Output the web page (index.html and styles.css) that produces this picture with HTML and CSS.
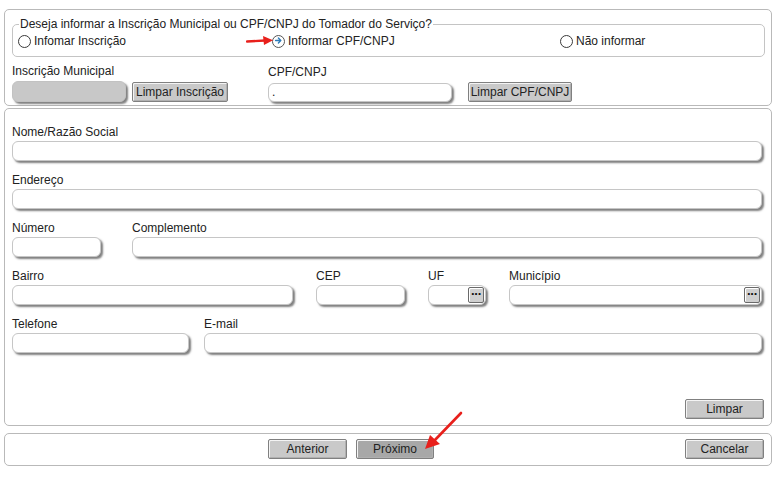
FILE: index.html
```html
<!DOCTYPE html>
<html lang="pt-BR">
<head>
<meta charset="utf-8">
<title>Tomador do Serviço</title>
<link rel="stylesheet" href="styles.css">
</head>
<body>
<div class="page">
  <section class="panel panel-top">
    <fieldset class="choice">
      <legend>Deseja informar a Inscrição Municipal ou CPF/CNPJ do Tomador do Serviço?</legend>
      <div class="radios">
        <label class="radio r-first"><span class="dot"></span>Infomar Inscrição</label>
        <label class="radio r-second"><span class="dot dot-on"><svg viewBox="0 0 13 13" width="13" height="13"><path d="M3.6 6.5h5.2M6.4 4.1l2.4 2.4-2.4 2.4" fill="none" stroke="#2b7bb9" stroke-width="1.4" stroke-linecap="round" stroke-linejoin="round"/></svg></span>Informar CPF/CNPJ</label>
        <label class="radio"><span class="dot"></span>Não informar</label>
      </div>
    </fieldset>
    <div class="id-row">
      <div class="id-group">
        <div class="lbl lbl-im">Inscrição Municipal</div>
        <div class="ctrl">
          <div class="field field-grey w-im"></div>
          <button class="btn btn-im">Limpar Inscrição</button>
        </div>
      </div>
      <div class="id-group">
        <div class="lbl">CPF/CNPJ</div>
        <div class="ctrl ctrl-cpf">
          <div class="field w-cpf">.</div>
          <button class="btn btn-cpf">Limpar CPF/CNPJ</button>
        </div>
      </div>
    </div>
  </section>

  <section class="panel panel-form">
    <div class="row">
      <div class="col grow"><div class="lbl">Nome/Razão Social</div><div class="field"></div></div>
    </div>
    <div class="row">
      <div class="col grow"><div class="lbl">Endereço</div><div class="field"></div></div>
    </div>
    <div class="row gap-num">
      <div class="col w-num"><div class="lbl">Número</div><div class="field"></div></div>
      <div class="col grow"><div class="lbl">Complemento</div><div class="field"></div></div>
    </div>
    <div class="row gap-bairro">
      <div class="col w-bairro"><div class="lbl">Bairro</div><div class="field"></div></div>
      <div class="col w-cep"><div class="lbl">CEP</div><div class="field"></div></div>
      <div class="col w-uf"><div class="lbl">UF</div><div class="field has-pick"><span class="pick">···</span></div></div>
      <div class="col grow"><div class="lbl">Município</div><div class="field has-pick"><span class="pick">···</span></div></div>
    </div>
    <div class="row gap-tel">
      <div class="col w-tel"><div class="lbl">Telefone</div><div class="field"></div></div>
      <div class="col grow"><div class="lbl">E-mail</div><div class="field"></div></div>
    </div>
    <div class="form-actions">
      <button class="btn btn-wide">Limpar</button>
    </div>
  </section>

  <section class="panel panel-nav">
    <button class="btn btn-wide btn-prev">Anterior</button>
    <button class="btn btn-wide btn-dark">Próximo</button>
    <button class="btn btn-wide btn-cancel">Cancelar</button>
  </section>

  <svg class="arrow arrow-right" width="30" height="12" viewBox="0 0 30 12">
    <path d="M1 6.5 L19 5.5" stroke="#e8201c" stroke-width="2.4" stroke-linecap="round" fill="none"/>
    <path d="M27 5.2 L17 1 L18 10 Z" fill="#e8201c"/>
  </svg>
  <svg class="arrow arrow-down" width="44" height="40" viewBox="0 0 44 40">
    <path d="M40 2 L13 30" stroke="#e8201c" stroke-width="2.6" stroke-linecap="round" fill="none"/>
    <path d="M4 38 L9 24 L19 33 Z" fill="#e8201c"/>
  </svg>
</div>
</body>
</html>
```
FILE: styles.css
```css
* { box-sizing: border-box; }
html, body { margin: 0; padding: 0; background: #ffffff; }
body {
  font-family: "Liberation Sans", Arial, sans-serif;
  font-size: 12px;
  color: #222;
}
.page {
  position: relative;
  width: 777px;
  height: 477px;
  padding: 9px 0 0 4px;
}
.panel {
  width: 768px;
  border: 1px solid #b9b9b9;
  border-radius: 5px;
  background: #fff;
}

/* ---------- generic field ---------- */
.lbl {
  line-height: 14px;
  white-space: nowrap;
  color: #222;
}
.field {
  position: relative;
  height: 20px;
  border: 1px solid #c6c6c6;
  border-radius: 6px;
  background: #fff;
  box-shadow: 2px 2px 2px rgba(0, 0, 0, 0.5);
  font-size: 12px;
  line-height: 16px;
  padding-left: 3px;
}
.btn {
  height: 20px;
  padding: 0 8px;
  font-family: "Liberation Sans", Arial, sans-serif;
  font-size: 12px;
  color: #222;
  background: #c9c9c9;
  border: 1px solid #808080;
  border-radius: 2px;
  box-shadow: inset 1px 1px 0 #f4f4f4, inset -1px -1px 0 #b0b0b0;
  line-height: 16px;
}

/* ---------- top panel ---------- */
.panel-top {
  height: 97px;
  padding: 7px 6px 0 7px;
}
.choice {
  margin: 0;
  width: 753px;
  border: 1px solid #c4c4c4;
  border-radius: 5px;
  padding: 3px 6px 8px 6px;
}
.choice legend {
  padding: 0 1px;
  line-height: 14px;
  font-size: 12px;
  color: #222;
}
.radios {
  display: flex;
  align-items: center;
  height: 14px;
}
.radio {
  display: flex;
  align-items: center;
  gap: 3px;
  line-height: 14px;
}
.r-first { width: 254px; margin-left: -1px; }
.r-second { width: 288px; }
.dot {
  display: inline-block;
  width: 13px;
  height: 13px;
  border: 1.4px solid #3a3a3a;
  border-radius: 50%;
  background: #fff;
  position: relative;
}
.dot-on { border-color: #555; }
.dot-on svg { position: absolute; left: -1.4px; top: -1.4px; }

.id-row {
  display: grid;
  grid-template-columns: 256px 1fr;
  align-items: end;
  margin-top: 8px;
}
.id-group .lbl { margin-bottom: 3px; }
.id-group .lbl-im { position: relative; top: -2px; margin-bottom: 1px; }
.ctrl {
  display: flex;
  align-items: flex-end;
  gap: 6px;
}
.ctrl-cpf { gap: 16px; }
.w-im { width: 114px; height: 21px; }
.w-cpf { width: 184px; height: 19px; }
.field.field-grey { background: #c8c8c8; border-color: #c2c2c2; }
.btn-im { width: 96px; height: 20px; padding: 0; }
.btn-cpf { width: 104px; height: 20px; padding: 0; }
.btn-wide { width: 79px; padding: 0; }

/* ---------- form panel ---------- */
.panel-form {
  margin-top: 2px;
  height: 318px;
  padding: 16px 7px 6px 7px;
  display: flex;
  flex-direction: column;
}
.row {
  display: flex;
  margin-bottom: 12px;
}
.col { display: flex; flex-direction: column; gap: 2px; }
.grow { flex: 1; }
.row .field { margin-right: 2px; }
.gap-num { gap: 29px; }
.w-num { width: 91px; }
.gap-bairro { gap: 21px; }
.w-bairro { width: 283px; }
.w-cep { width: 91px; }
.w-uf { width: 60px; }
.gap-tel { gap: 13px; }
.w-tel { width: 179px; }
.has-pick .pick {
  position: absolute;
  right: 1px;
  top: 1px;
  width: 16px;
  height: 16px;
  border: 1px solid #6a6a6a;
  border-radius: 2px;
  background: #cfcfcf;
  box-shadow: inset 1px 1px 0 #fff;
  font-size: 13px;
  font-weight: bold;
  line-height: 12px;
  text-align: center;
  letter-spacing: -1px;
  color: #111;
}
.form-actions {
  margin-top: auto;
  display: flex;
  justify-content: flex-end;
}

/* ---------- nav panel ---------- */
.panel-nav {
  margin-top: 7px;
  height: 33px;
  display: flex;
  align-items: center;
  padding: 0 7px 1px 263px;
  gap: 9px;
}
.btn-dark { background: #a8a8a8; width: 78px; }
.btn-cancel { margin-left: auto; }

/* ---------- annotation arrows ---------- */
.arrow { position: absolute; }
.arrow-right { left: 246px; top: 35px; }
.arrow-down { left: 421px; top: 411px; }
```
